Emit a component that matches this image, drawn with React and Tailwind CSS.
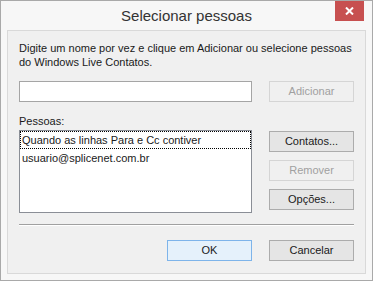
import React from 'react';

const Button = ({ children, disabled, primary, className = '' }) => (
    <div
        className={
            'h-[21px] flex items-center justify-center border text-[11px] ' +
            (disabled
                ? 'border-[#d5d5d5] bg-[#f0f0f0] text-[#a0a0a0] '
                : primary
                ? 'border-[#7eb4ea] bg-[#e5f1fb] text-[#1a1a1a] '
                : 'border-[#acacac] bg-[#e5e5e5] text-[#1a1a1a] ') +
            className
        }
    >
        {children}
    </div>
);

const App = () => {
    return (
        <div
            className="w-[373px] h-[281px] border border-[#a9a9a9] bg-[#f7f7f7] flex flex-col"
            style={{ fontFamily: '"Liberation Sans", Arial, sans-serif' }}
        >
            {/* title bar */}
            <div className="h-[29px] flex items-start relative">
                <div className="flex-1 text-center text-[15px] text-[#333] pt-[4px]">Selecionar pessoas</div>
                <div className="absolute right-[8px] top-0 w-[29px] h-[20px] bg-[#c75050] flex items-center justify-center">
                    <svg width="9" height="8" viewBox="0 0 9 8">
                        <path d="M1 0.5 L8 7.5 M8 0.5 L1 7.5" stroke="#fff" strokeWidth="2" />
                    </svg>
                </div>
            </div>

            {/* client area */}
            <div className="mx-[6px] mb-[6px] flex-1 border border-[#d9d9d9] bg-[#f0f0f0] px-[11px] pt-[10px] text-[11px] text-[#1a1a1a]">
                <div className="leading-[14px]">
                    Digite um nome por vez e clique em Adicionar ou selecione pessoas
                    <br />
                    do Windows Live Contatos.
                </div>

                <div className="mt-[12px] flex gap-[17px]">
                    <div className="w-[233px] h-[21px] border border-[#a5a5a5] bg-white" />
                    <Button disabled className="w-[85px]">Adicionar</Button>
                </div>

                <div className="mt-[12px] leading-[14px]">Pessoas:</div>

                <div className="mt-[2px] flex gap-[17px]">
                    <div className="w-[233px] h-[83px] border border-[#8a8e96] bg-white">
                        <div className="h-[18px] border border-dotted border-black flex items-center px-[1px] leading-[14px]">
                            Quando as linhas Para e Cc contiver
                        </div>
                        <div className="h-[18px] flex items-center px-[2px] leading-[14px]">usuario@splicenet.com.br</div>
                    </div>
                    <div className="w-[85px] flex flex-col gap-[8px] pt-[1px]">
                        <Button>Contatos...</Button>
                        <Button disabled>Remover</Button>
                        <Button>Opções...</Button>
                    </div>
                </div>

                <div className="mt-[11px] h-[2px] border-t border-[#a0a0a0] border-b border-b-white" />

                <div className="mt-[14px] flex justify-end gap-[17px]">
                    <Button primary className="w-[85px]">OK</Button>
                    <Button className="w-[85px]">Cancelar</Button>
                </div>
            </div>
        </div>
    );
};

export default App;
